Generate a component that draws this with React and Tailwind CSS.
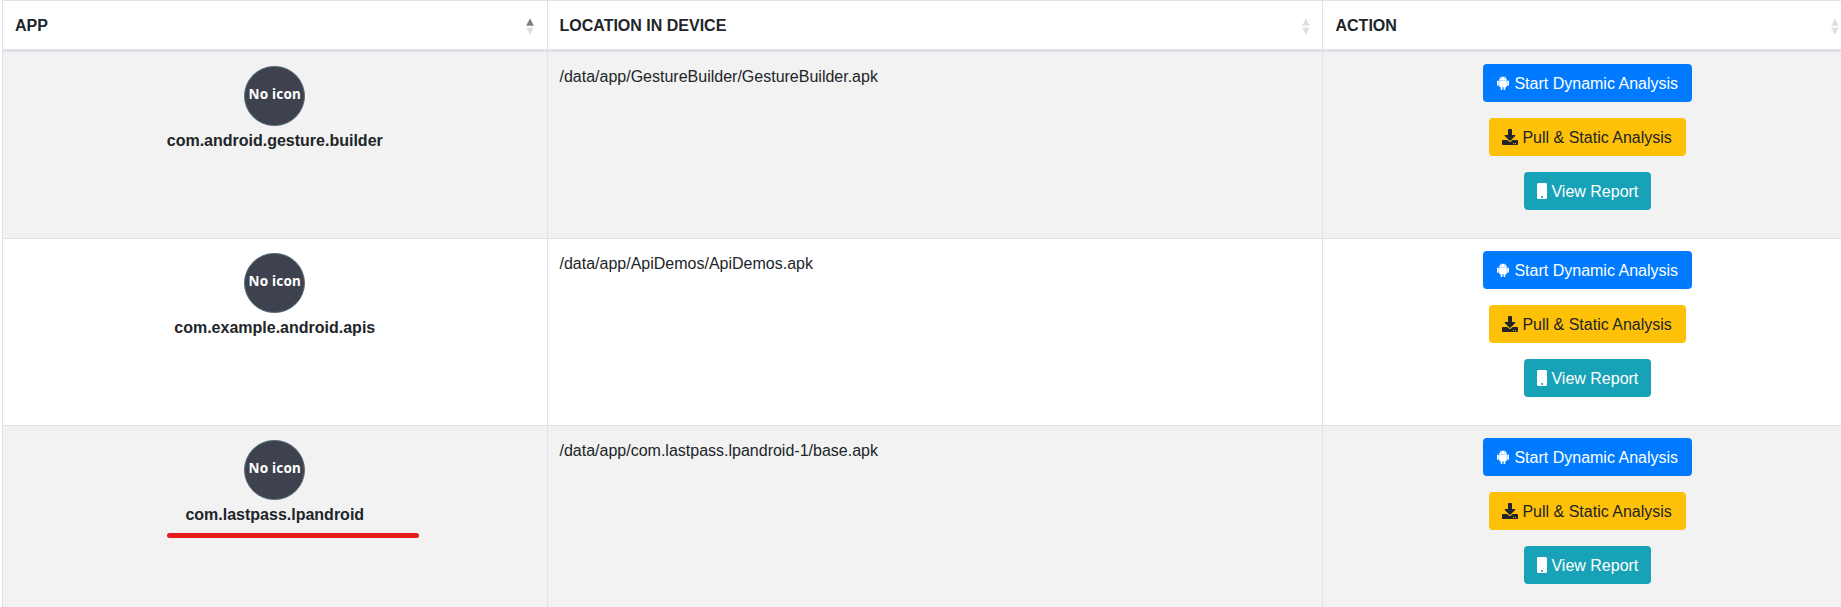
import { FaDownload, FaMobile } from "react-icons/fa";

const rows = [
  { name: "com.android.gesture.builder", path: "/data/app/GestureBuilder/GestureBuilder.apk", shade: true },
  { name: "com.example.android.apis", path: "/data/app/ApiDemos/ApiDemos.apk", shade: false },
  { name: "com.lastpass.lpandroid", path: "/data/app/com.lastpass.lpandroid-1/base.apk", shade: true, marked: true },
];

function AndroidIcon() {
  return (
    <svg viewBox="0 0 448 512" className="h-4 w-3.5 shrink-0" fill="currentColor">
      <path d="M89.6 204.5v115.8c0 15.4-12.1 27.7-27.5 27.7-15.3 0-30.1-12.4-30.1-27.7V204.5c0-15.1 14.8-27.5 30.1-27.5 15.1 0 27.5 12.4 27.5 27.5zm10.8 157c0 16.4 13.2 29.6 29.6 29.6h19.9l.3 61.1c0 36.9 55.2 36.6 55.2 0v-61.1h37.2v61.1c0 36.7 55.5 36.8 55.5 0v-61.1h20.2c16.2 0 29.4-13.2 29.4-29.6V182.1H100.4v179.4zm248-189.1H99.3c0-42.8 25.6-80 63.6-99.4l-19.1-35.3c-2.8-4.9 4.3-8 6.7-3.8l19.4 35.6c34.9-15.5 75-14.7 108.3 0L297.5 34c2.5-4.3 9.5-1.1 6.7 3.8L285.1 73c37.7 19.4 63.3 56.6 63.3 99.4zm-170.7-55.5c0-5.7-4.6-10.5-10.5-10.5-5.7 0-10.2 4.8-10.2 10.5s4.6 10.5 10.2 10.5c5.9 0 10.5-4.8 10.5-10.5zm113.4 0c0-5.7-4.6-10.5-10.2-10.5-5.9 0-10.5 4.8-10.5 10.5s4.6 10.5 10.5 10.5c5.6 0 10.2-4.8 10.2-10.5zm94.8 60.1c-15.1 0-27.5 12.1-27.5 27.5v115.8c0 15.4 12.4 27.7 27.5 27.7 15.4 0 30.1-12.4 30.1-27.7V204.5c0-15.4-14.8-27.5-30.1-27.5z" />
    </svg>
  );
}

function SortIcon({ asc }) {
  return (
    <svg viewBox="0 0 8 17" className="mt-0.5 h-[17px] w-2 shrink-0">
      <path d="M4 0.2 7.8 7.7H0.2z" fill={asc ? "#7c7e80" : "#dedfe0"} />
      <path d="M0.2 9.5H7.8L4 16.8z" fill="#dedfe0" />
    </svg>
  );
}

function HeaderCell({ children, asc, pad }) {
  return (
    <div className={"flex h-12 items-center justify-between border-r border-[#dee2e6] font-bold " + pad}>
      <span className="pt-px">{children}</span>
      <SortIcon asc={asc} />
    </div>
  );
}

function NoIcon() {
  return (
    <div className="flex h-16 w-16 items-center justify-center">
      <div className="flex h-[60px] w-[61px] items-center justify-center rounded-full border border-[#56717a] bg-[#3e424e] pb-[3px]">
        <span className="font-['Noto_Sans','Open_Sans',sans-serif] text-[13.5px] leading-none font-bold tracking-[0.2px] whitespace-nowrap text-white">No icon</span>
      </div>
    </div>
  );
}

function ActionButton({ icon, children, look }) {
  return (
    <button className={"flex h-[38px] items-center gap-[4.45px] rounded-[4px] pl-[13px] whitespace-nowrap " + look}>
      {icon}
      <span className="mt-px leading-6">{children}</span>
    </button>
  );
}

function Row({ row }) {
  return (
    <div className={"grid h-[187px] grid-cols-[545px_775px_530px] border-b border-[#dee2e6] " + (row.shade ? "bg-[#f2f2f2]" : "bg-white")}>
      <div className="flex flex-col items-center border-r border-[#dee2e6] pt-3 pr-[0.5px]">
        <NoIcon />
        <strong className="h-6 pt-px leading-6 font-bold">{row.name}</strong>
        {row.marked && <div className="mt-[7px] ml-[35.5px] h-[5px] w-[252px] rounded-full bg-[#e51b1c]" />}
      </div>
      <div className="border-r border-[#dee2e6] pt-[13px] pr-3 pl-[11.5px]">{row.path}</div>
      <div className="flex flex-col items-center gap-4 border-r border-[#dee2e6] pt-3">
        <ActionButton icon={<AndroidIcon />} look="w-[209px] bg-[#007bff] text-white">Start Dynamic Analysis</ActionButton>
        <ActionButton icon={<FaDownload className="h-4 w-4 shrink-0" />} look="w-[197px] bg-[#ffc107] text-[#212529]">Pull &amp; Static Analysis</ActionButton>
        <ActionButton icon={<FaMobile className="h-4 w-2.5 shrink-0" />} look="w-[127px] bg-[#17a2b8] text-white">View Report</ActionButton>
      </div>
    </div>
  );
}

export default function App() {
  return (
    <div className="h-[607px] w-full overflow-hidden bg-white pl-0.5 font-['Liberation_Sans',Arial,sans-serif] text-[16px] leading-6 text-[#212529]">
      <div className="w-[1851px] border-t border-l border-[#dee2e6]">
        <div className="grid grid-cols-[545px_775px_530px] border-b-[3px] border-[#dee2e6]">
          <HeaderCell asc pad="pl-3 pr-[12.7px]">APP</HeaderCell>
          <HeaderCell pad="pl-[11.5px] pr-3">LOCATION IN DEVICE</HeaderCell>
          <HeaderCell pad="pl-[12.5px] pr-[13.5px]">ACTION</HeaderCell>
        </div>
        {rows.map((row) => (
          <Row key={row.name} row={row} />
        ))}
      </div>
    </div>
  );
}
